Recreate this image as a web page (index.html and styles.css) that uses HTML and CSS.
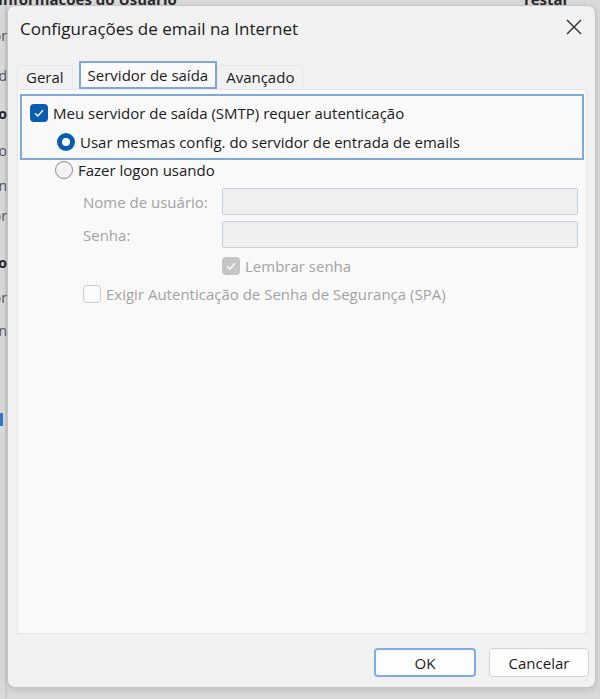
FILE: index.html
```html
<!DOCTYPE html>
<html>
<head>
  <link rel="stylesheet" href="styles.css">
</head>
<body>
  <div class="backdrop">
    <div class="bg-title">Informações do Usuário</div>
    <div class="bg-title bg-right">Testar Con</div>
    <div class="bg-labels">
      <span style="top: 26px">Seu nor</span>
      <span style="top: 66px">Endered</span>
      <span class="strong" style="top: 104px">Info</span>
      <span style="top: 141px">Tipo</span>
      <span style="top: 176px">Servidon</span>
      <span style="top: 206px">Servidor</span>
      <span class="strong" style="top: 253px">Info</span>
      <span style="top: 288px">Nome de usuor</span>
      <span style="top: 321px">Sen</span>
    </div>
    <div class="bg-check"></div>
  </div>

  <div class="dialog">
    <div class="titlebar">
      <h1>Configurações de email na Internet</h1>
      <svg class="close" width="18" height="18" viewBox="0 0 18 18" fill="none">
        <path d="M2 2L16 16M16 2L2 16" stroke="#2b2b2b" stroke-width="1.4"/>
      </svg>
    </div>

    <div class="tabs">
      <div class="tab">Geral</div>
      <div class="tab active">Servidor de saída</div>
      <div class="tab">Avançado</div>
    </div>

    <div class="panel">
      <div class="focus-group">
        <label class="option">
          <span class="checkbox checked">
            <svg width="12" height="12" viewBox="0 0 12 12" fill="none">
              <path d="M2 6.3L4.8 9L10 3.2" stroke="white" stroke-width="1.4"/>
            </svg>
          </span>
          Meu servidor de saída (SMTP) requer autenticação
        </label>
        <label class="option indent">
          <span class="radio checked"></span>
          Usar mesmas config. do servidor de entrada de emails
        </label>
      </div>

      <label class="option indent loose">
        <span class="radio"></span>
        Fazer logon usando
      </label>

      <div class="fields">
        <span class="field-label">Nome de usuário:</span>
        <span class="input"></span>
        <span class="field-label">Senha:</span>
        <span class="input"></span>
        <span></span>
        <label class="option disabled">
          <span class="checkbox checked-disabled">
            <svg width="12" height="12" viewBox="0 0 12 12" fill="none">
              <path d="M2 6.3L4.8 9L10 3.2" stroke="white" stroke-width="1.4"/>
            </svg>
          </span>
          Lembrar senha
        </label>
      </div>

      <label class="option disabled spa">
        <span class="checkbox off-disabled"></span>
        Exigir Autenticação de Senha de Segurança (SPA)
      </label>
    </div>

    <div class="footer">
      <button class="btn primary">OK</button>
      <button class="btn">Cancelar</button>
    </div>
  </div>
</body>
</html>
```

FILE: styles.css
```css
:root {
  --text: #1b1b1b;
  --text-disabled: #a3a3a3;
  --accent: #0a5cb3;
  --focus: #7fa8d8;
  --dialog-bg: #f1f1f1;
  --panel-bg: #f9f9f9;
}

html, body {
  margin: 0;
  height: 100%;
}

body {
  position: relative;
  box-sizing: border-box;
  padding: 5px 4px 11px 7px;
  background: #d4d4d4;
  font-family: "Open Sans", "Noto Sans", sans-serif;
  font-size: 15px;
  color: var(--text);
  overflow: hidden;
}

/* window behind the dialog */
.backdrop {
  position: absolute;
  inset: 0;
  background: linear-gradient(to right, #d9d9d9 0, #d9d9d9 5px, #bdbdbd 6px, #d9d9d9 7px);
}

.bg-title {
  position: absolute;
  top: -11px;
  left: -2px;
  font-weight: 700;
  font-size: 15px;
  color: #2a2a2a;
}

.bg-right {
  left: 522px;
}

.bg-labels span {
  position: absolute;
  right: 593px;
  font-size: 14px;
  color: #555;
  white-space: nowrap;
}

.bg-labels .strong {
  font-weight: 700;
  color: #222;
}

.bg-check {
  position: absolute;
  top: 413px;
  left: 0;
  width: 3px;
  height: 13px;
  background: #2f79c8;
}

.dialog {
  position: relative;
  box-sizing: border-box;
  height: 100%;
  display: flex;
  flex-direction: column;
  background: var(--dialog-bg);
  border: 1px solid #c4c4c4;
  border-radius: 8px;
  box-shadow: 0 2px 6px rgba(0, 0, 0, 0.12);
}

.titlebar {
  display: flex;
  align-items: center;
  justify-content: space-between;
  height: 44px;
  padding: 0 12px 0 12px;
}

.titlebar h1 {
  margin: 0;
  font-size: 17px;
  font-weight: 400;
  color: #1a1a1a;
}

.close {
  margin-top: -2px;
}

.tabs {
  display: flex;
  align-items: flex-end;
  margin: 11px 0 0 9px;
  height: 28px;
}

.tab {
  box-sizing: border-box;
  height: 24px;
  padding: 0 8px;
  line-height: 23px;
  color: var(--text);
  border: 1px solid #e6e6e6;
  border-bottom: none;
}

.tab.active {
  height: 28px;
  line-height: 24px;
  margin: 0 0 0 6px;
  padding: 0 7px;
  border: 2px solid var(--focus);
  background: var(--panel-bg);
}

.panel {
  flex: 1;
  margin: 0 8px 0 9px;
  padding: 4px 2px;
  background: var(--panel-bg);
  border: 1px solid #e6e6e6;
}

.focus-group {
  box-sizing: border-box;
  height: 66px;
  border: 2px solid var(--focus);
  padding: 8px 8px 0;
  display: flex;
  flex-direction: column;
  gap: 11px;
}

.option {
  display: flex;
  align-items: center;
  gap: 5px;
  height: 18px;
  white-space: nowrap;
}

.indent {
  padding-left: 27px;
}

.loose {
  margin: 1px 0 0 8px;
}

.checkbox,
.radio {
  box-sizing: border-box;
  flex: none;
  width: 18px;
  height: 18px;
  display: flex;
  align-items: center;
  justify-content: center;
}

.checkbox {
  border-radius: 4px;
}

.checkbox.checked {
  background: var(--accent);
}

.checkbox.checked-disabled {
  background: #c5c5c5;
}

.checkbox.off-disabled {
  border: 1px solid #cbcbcb;
  background: #fbfbfb;
}

.radio {
  border-radius: 50%;
  border: 1px solid #8a8a8a;
  background: #f2f2f2;
}

.radio.checked {
  border: none;
  background: var(--accent);
}

.radio.checked::after {
  content: "";
  width: 8px;
  height: 8px;
  border-radius: 50%;
  background: white;
}

.fields {
  display: grid;
  grid-template-columns: 139px 356px;
  row-gap: 6px;
  align-items: center;
  margin: 9px 0 0 63px;
}

.field-label {
  color: var(--text-disabled);
}

.input {
  box-sizing: border-box;
  height: 27px;
  background: #efefef;
  border: 1px solid #c6d2e0;
  border-radius: 2px;
}

.disabled {
  color: var(--text-disabled);
}

.fields .option {
  margin-top: 3px;
}

.spa {
  margin: 10px 0 0 63px;
}

.footer {
  display: flex;
  justify-content: flex-end;
  gap: 13px;
  height: 53px;
  padding: 14px 6px 0 0;
  box-sizing: border-box;
}

.btn {
  box-sizing: border-box;
  height: 29px;
  width: 100px;
  font-family: inherit;
  font-size: 15px;
  color: var(--text);
  background: #fdfdfd;
  border: 1px solid #d3d3d3;
  border-radius: 4px;
}

.btn.primary {
  width: 102px;
  border: 2px solid #7eaee0;
}
```
